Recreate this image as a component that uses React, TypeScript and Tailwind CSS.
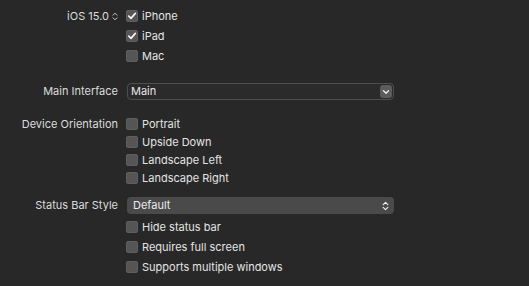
import React from "react";

const font = { fontFamily: "Inter, 'Noto Sans', sans-serif" };

function Check({ checked }: { checked?: boolean }) {
  return (
    <span className="w-[12px] h-[12px] rounded-[3px] bg-[#555555] flex items-center justify-center shrink-0 shadow-[inset_0_0_0_0.5px_#6a6a6a]">
      {checked && (
        <svg width="10" height="10" viewBox="0 0 10 10">
          <path d="M1.8 5.2 L4 7.4 L8.3 2.4" fill="none" stroke="#f2f2f2" strokeWidth="1.7" strokeLinecap="round" strokeLinejoin="round" />
        </svg>
      )}
    </span>
  );
}

function CheckRow({ label, checked, h }: { label: string; checked?: boolean; h: string }) {
  return (
    <div className={`flex items-center gap-[4px] ${h}`}>
      <Check checked={checked} />
      <span className="text-[11px] text-[#e4e4e4]">{label}</span>
    </div>
  );
}

function Label({ children }: { children: React.ReactNode }) {
  return <div className="w-[118px] shrink-0 text-right text-[11px] text-[#dcdcdc]">{children}</div>;
}

export default function App() {
  return (
    <div className="w-[529px] h-[286px] bg-[#282828] pt-[6px]" style={font}>
      {/* iOS target */}
      <div className="flex gap-[8px]">
        <div className="w-[118px] shrink-0 flex justify-end items-center h-[20px] gap-[3px] text-[11px] text-[#dcdcdc]">
          <span>iOS 15.0</span>
          <svg width="6" height="9" viewBox="0 0 6 9">
            <path d="M1 3.2 L3 1.2 L5 3.2 M1 5.8 L3 7.8 L5 5.8" fill="none" stroke="#cfcfcf" strokeWidth="1" strokeLinecap="round" strokeLinejoin="round" />
          </svg>
        </div>
        <div className="flex flex-col">
          <CheckRow label="iPhone" checked h="h-[20px]" />
          <CheckRow label="iPad" checked h="h-[20px]" />
          <CheckRow label="Mac" h="h-[20px]" />
        </div>
      </div>

      {/* Main Interface */}
      <div className="flex items-center gap-[9px] mt-[17px]">
        <Label>Main Interface</Label>
        <div className="w-[267px] h-[17px] rounded-[4px] border border-[#4e4e4e] bg-[#2b2b2b] flex items-center justify-between pl-[3px] pr-[1px]">
          <span className="text-[11px] text-[#e6e6e6]">Main</span>
          <span className="w-[12px] h-[13px] rounded-[3px] bg-[#5c5c5c] flex items-center justify-center">
            <svg width="8" height="6" viewBox="0 0 8 6">
              <path d="M1.5 1.8 L4 4.2 L6.5 1.8" fill="none" stroke="#f0f0f0" strokeWidth="1.3" strokeLinecap="round" strokeLinejoin="round" />
            </svg>
          </span>
        </div>
      </div>

      {/* Device Orientation */}
      <div className="flex gap-[8px] mt-[15px]">
        <div className="w-[118px] shrink-0 h-[18px] flex items-center justify-end text-[11px] text-[#dcdcdc]">Device Orientation</div>
        <div className="flex flex-col">
          <CheckRow label="Portrait" h="h-[18px]" />
          <CheckRow label="Upside Down" h="h-[18px]" />
          <CheckRow label="Landscape Left" h="h-[18px]" />
          <CheckRow label="Landscape Right" h="h-[18px]" />
        </div>
      </div>

      {/* Status Bar Style */}
      <div className="flex items-center gap-[9px] mt-[10px]">
        <Label>Status Bar Style</Label>
        <div className="w-[267px] h-[17px] rounded-[4px] bg-[#4a4a4a] flex items-center justify-between pl-[6px] pr-[5px]">
          <span className="text-[11px] text-[#ececec]">Default</span>
          <svg width="7" height="10" viewBox="0 0 7 10">
            <path d="M1.2 3.6 L3.5 1.4 L5.8 3.6 M1.2 6.4 L3.5 8.6 L5.8 6.4" fill="none" stroke="#eeeeee" strokeWidth="1.2" strokeLinecap="round" strokeLinejoin="round" />
          </svg>
        </div>
      </div>

      <div className="flex gap-[8px] mt-[3px]">
        <div className="w-[118px] shrink-0" />
        <div className="flex flex-col">
          <CheckRow label="Hide status bar" h="h-[20px]" />
          <CheckRow label="Requires full screen" h="h-[20px]" />
          <CheckRow label="Supports multiple windows" h="h-[20px]" />
        </div>
      </div>
    </div>
  );
}
